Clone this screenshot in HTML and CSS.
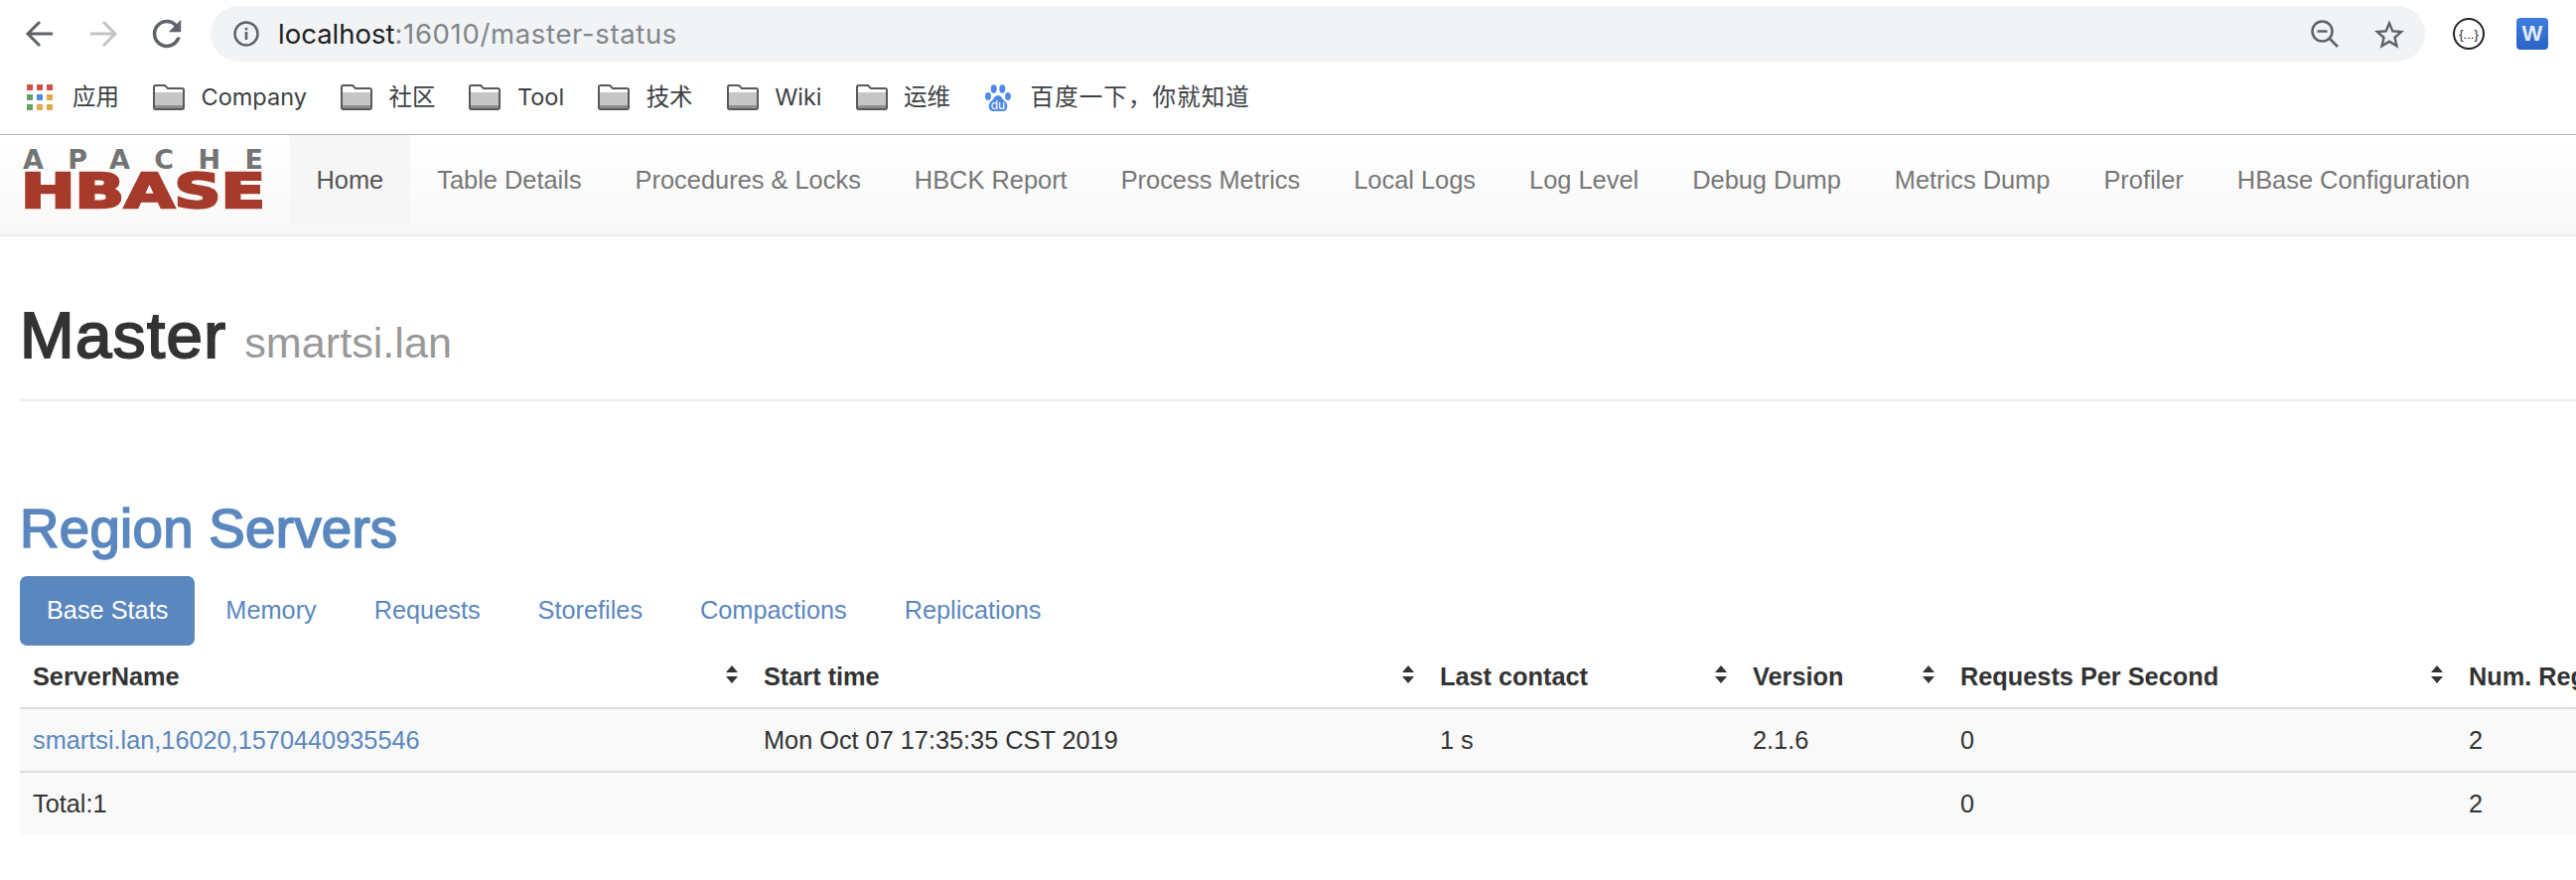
FILE: index.html
```html
<!DOCTYPE html>
<html>
<head>
  <title>Master: smartsi.lan</title>
  <link rel="stylesheet" href="styles.css">
</head>
<body>

<!-- browser chrome -->
<div class="toolbar">
  <svg class="tool-icon" viewBox="0 0 32 32"><path d="M29 16H4M16 4 4 16l12 12" fill="none" stroke="#5f6368" stroke-width="3"/></svg>
  <svg class="tool-icon" viewBox="0 0 32 32"><path d="M3 16h25M16 4l12 12-12 12" fill="none" stroke="#c2c4c6" stroke-width="3"/></svg>
  <svg class="tool-icon" viewBox="3 3 18 18"><path fill="#5f6368" d="M17.65 6.35C16.2 4.9 14.21 4 12 4c-4.42 0-7.99 3.58-7.99 8s3.57 8 7.99 8c3.73 0 6.84-2.55 7.73-6h-2.08c-.82 2.33-3.04 4-5.65 4-3.31 0-6-2.69-6-6s2.69-6 6-6c1.66 0 3.14.69 4.22 1.78L13 11h7V4l-2.35 2.35z"/></svg>
  <div class="omnibox">
    <svg class="info-icon" viewBox="0 0 26 26"><circle cx="13" cy="13" r="11.5" fill="none" stroke="#5f6368" stroke-width="2.5"/><rect x="11.7" y="11" width="2.6" height="8" fill="#5f6368"/><rect x="11.7" y="6.8" width="2.6" height="2.6" fill="#5f6368"/></svg>
    <span class="url">localhost<span class="url-rest">:16010/master-status</span></span>
    <svg class="zoom-icon" viewBox="0 0 28 28"><circle cx="11.5" cy="11.5" r="10" fill="none" stroke="#5f6368" stroke-width="2.6"/><path d="M18.5 18.5 27 27M6.5 11.5h10" fill="none" stroke="#5f6368" stroke-width="2.6"/></svg>
    <svg class="star-icon" viewBox="2 2 20 19"><path fill="#5f6368" d="M22 9.24l-7.19-.62L12 2 9.19 8.63 2 9.24l5.46 4.73L5.82 21 12 17.27 18.18 21l-1.63-7.03L22 9.24zM12 15.4l-3.76 2.27 1-4.28-3.32-2.88 4.38-.38L12 6.1l1.71 4.04 4.38.38-3.32 2.88 1 4.28L12 15.4z"/></svg>
  </div>
  <div class="ext-json">{...}</div>
  <div class="ext-word">W</div>
</div>

<div class="bookmarks">
  <div class="bookmark">
    <div class="apps-grid">
      <i class="red"></i><i class="red"></i><i class="red"></i>
      <i class="green"></i><i class="blue"></i><i class="yellow"></i>
      <i class="green"></i><i class="yellow"></i><i class="yellow"></i>
    </div>
    <span>应用</span>
  </div>
  <div class="bookmark">
    <svg class="folder" viewBox="0 0 32 26"><use href="#folder-shape"/></svg>
    <span>Company</span>
  </div>
  <div class="bookmark">
    <svg class="folder" viewBox="0 0 32 26"><use href="#folder-shape"/></svg>
    <span>社区</span>
  </div>
  <div class="bookmark">
    <svg class="folder" viewBox="0 0 32 26"><use href="#folder-shape"/></svg>
    <span>Tool</span>
  </div>
  <div class="bookmark">
    <svg class="folder" viewBox="0 0 32 26"><use href="#folder-shape"/></svg>
    <span>技术</span>
  </div>
  <div class="bookmark">
    <svg class="folder" viewBox="0 0 32 26"><use href="#folder-shape"/></svg>
    <span>Wiki</span>
  </div>
  <div class="bookmark">
    <svg class="folder" viewBox="0 0 32 26"><use href="#folder-shape"/></svg>
    <span>运维</span>
  </div>
  <div class="bookmark">
    <svg class="paw" viewBox="0 0 28 28">
      <ellipse cx="4" cy="13" rx="3" ry="4" fill="#4f8ae6"/>
      <ellipse cx="9.700" cy="5.500" rx="3" ry="4.200" fill="#4f8ae6"/>
      <ellipse cx="18.300" cy="5.500" rx="3" ry="4.200" fill="#4f8ae6"/>
      <ellipse cx="24" cy="13" rx="3" ry="4" fill="#4f8ae6"/>
      <path d="M14 12c3 0 4 3 6 5 3 2 4 5 3 8-1 3-3 3-5 3H10c-2 0-4 0-5-3-1-3 0-6 3-8 2-2 3-5 6-5z" fill="#4f8ae6"/>
      <text x="14" y="26" class="paw-text">du</text>
    </svg>
    <span class="baidu-name">百度一下，你就知道</span>
  </div>
</div>

<!-- hbase page -->
<nav class="navbar">
  <a class="brand" href="#">
    <svg class="logo" viewBox="0 0 240 60">
      <text x="-1" y="20" class="logo-apache" textLength="242" lengthAdjust="spacing">APACHE</text>
      <text x="-3" y="58.700" class="logo-hbase" textLength="246" lengthAdjust="spacingAndGlyphs">HBASE</text>
    </svg>
  </a>
  <ul class="nav-links">
    <li class="active"><a href="#">Home</a></li>
    <li><a href="#">Table Details</a></li>
    <li><a href="#">Procedures &amp; Locks</a></li>
    <li><a href="#">HBCK Report</a></li>
    <li><a href="#">Process Metrics</a></li>
    <li><a href="#">Local Logs</a></li>
    <li><a href="#">Log Level</a></li>
    <li><a href="#">Debug Dump</a></li>
    <li><a href="#">Metrics Dump</a></li>
    <li><a href="#">Profiler</a></li>
    <li><a href="#">HBase Configuration</a></li>
  </ul>
</nav>

<div class="container">
  <div class="page-header">
    <h1>Master <small>smartsi.lan</small></h1>
  </div>

  <h2 class="section-title"><a href="#">Region Servers</a></h2>

  <ul class="tabs">
    <li class="active"><a href="#">Base Stats</a></li>
    <li><a href="#">Memory</a></li>
    <li><a href="#">Requests</a></li>
    <li><a href="#">Storefiles</a></li>
    <li><a href="#">Compactions</a></li>
    <li><a href="#">Replications</a></li>
  </ul>

  <table class="servers">
    <colgroup>
      <col class="col-name">
      <col class="col-start">
      <col class="col-contact">
      <col class="col-version">
      <col class="col-rps">
      <col class="col-regions">
    </colgroup>
    <thead>
      <tr>
        <th><div class="th-inner">ServerName<span class="sort"></span></div></th>
        <th><div class="th-inner">Start time<span class="sort"></span></div></th>
        <th><div class="th-inner">Last contact<span class="sort"></span></div></th>
        <th><div class="th-inner">Version<span class="sort"></span></div></th>
        <th><div class="th-inner">Requests Per Second<span class="sort"></span></div></th>
        <th><div class="th-inner">Num. Regions<span class="sort"></span></div></th>
      </tr>
    </thead>
    <tbody>
      <tr>
        <td><a href="#">smartsi.lan,16020,1570440935546</a></td>
        <td>Mon Oct 07 17:35:35 CST 2019</td>
        <td>1 s</td>
        <td>2.1.6</td>
        <td>0</td>
        <td>2</td>
      </tr>
      <tr>
        <td>Total:1</td>
        <td></td>
        <td></td>
        <td></td>
        <td>0</td>
        <td>2</td>
      </tr>
    </tbody>
  </table>
</div>

<svg class="defs" width="0" height="0">
  <symbol id="folder-shape" viewBox="0 0 32 26">
    <path d="M2.5 25h27a1.5 1.5 0 0 0 1.5-1.500V5.500A1.500 1.500 0 0 0 29.500 4H15l-3-3H2.500A1.500 1.500 0 0 0 1 2.500v21A1.500 1.500 0 0 0 2.500 25z" fill="#fdfdfd" stroke="#58595b" stroke-width="2"/>
    <rect x="2" y="8" width="28" height="13" fill="#c6c6c6"/>
    <rect x="2" y="21" width="28" height="3" fill="#8e8e8e"/>
  </symbol>
</svg>

</body>
</html>
```

FILE: styles.css
```css
html, body {
  margin: 0;
  padding: 0;
  overflow: hidden;
}

body {
  font-family: "Liberation Sans", Arial, sans-serif;
  font-size: 25.3px;
  line-height: 36px;
  color: #333;
  background-color: white;
}

a {
  color: #5b87bf;
  text-decoration: none;
}

ul {
  list-style: none;
  margin: 0;
  padding: 0;
}

/* browser chrome */
.toolbar {
  display: flex;
  align-items: center;
  height: 68px;
  padding: 0 28px 0 24px;
  box-sizing: border-box;
}

.tool-icon {
  width: 32px;
  height: 32px;
  margin-right: 32px;
}

.tool-icon:nth-child(3) {
  margin-right: 28px;
}

.omnibox {
  flex: 1;
  display: flex;
  align-items: center;
  height: 56px;
  padding: 0 21px 0 23px;
  border-radius: 28px;
  background-color: #f1f3f4;
}

.info-icon {
  width: 26px;
  height: 26px;
  margin-right: 19px;
}

.url {
  flex: 1;
  font-family: Inter, sans-serif;
  font-size: 27.5px;
  color: #202124;
}

.url-rest {
  color: #80868b;
  letter-spacing: 0.65px;
}

.zoom-icon {
  width: 28px;
  height: 28px;
  margin-right: 36px;
}

.star-icon {
  width: 30px;
  height: 29px;
}

.ext-json {
  display: flex;
  align-items: center;
  justify-content: center;
  width: 32px;
  height: 32px;
  margin-left: 28px;
  border: 2px solid #222;
  border-radius: 50%;
  box-sizing: border-box;
  font-size: 13px;
  line-height: 1;
  white-space: nowrap;
  color: #222;
}

.ext-word {
  width: 32px;
  height: 32px;
  margin-left: 32px;
  border-radius: 4px;
  background: linear-gradient(#3f7ee0, #2b62c6);
  font-weight: bold;
  font-size: 22px;
  line-height: 32px;
  text-align: center;
  color: #e4ecfa;
}

.bookmarks {
  display: flex;
  align-items: center;
  gap: 34px;
  height: 59px;
  padding: 0 0 8px 27px;
  border-bottom: 1px solid #b5b5b5;
  font-family: Inter, "Noto Sans CJK SC", sans-serif;
  font-size: 23.5px;
  color: #3c4043;
}

.bookmark {
  display: flex;
  align-items: center;
  gap: 16.5px;
}

.baidu-name {
  letter-spacing: 1.1px;
}

.apps-grid {
  display: grid;
  grid-template-columns: repeat(3, 6px);
  grid-template-rows: repeat(3, 6px);
  gap: 4px;
  margin-right: 3.5px;
}

.apps-grid .red { background-color: #cf5246; }
.apps-grid .green { background-color: #6a9e64; }
.apps-grid .blue { background-color: #4f8ae6; }
.apps-grid .yellow { background-color: #e2a94b; }

.folder {
  width: 32px;
  height: 26px;
}

.paw {
  width: 28px;
  height: 28px;
  margin-right: 2px;
}

.paw-text {
  font-size: 12px;
  fill: white;
  text-anchor: middle;
}

.defs {
  position: absolute;
}

/* navbar */
.navbar {
  display: flex;
  height: 100px;
  border-bottom: 2px solid #eeeeee;
  background: linear-gradient(#ffffff, #f8f8f8);
}

.brand {
  display: block;
  width: 240px;
  height: 60px;
  margin: 14px 27.5px 0 24px;
}

.logo {
  display: block;
  width: 240px;
  height: 60px;
  overflow: visible;
}

.logo-apache {
  font-family: "DejaVu Sans", sans-serif;
  font-weight: bold;
  font-size: 27px;
  fill: #747474;
}

.logo-hbase {
  font-family: "DejaVu Sans", sans-serif;
  font-weight: bold;
  font-size: 48px;
  fill: #a63a2b;
  stroke: #a63a2b;
  stroke-width: 2.5px;
}

.nav-links {
  display: flex;
  font-size: 25.4px;
}

.nav-links a {
  display: block;
  height: 90px;
  padding: 0 27px;
  line-height: 90px;
  color: #777;
}

.nav-links .active a {
  color: #555;
  background-color: #f6f6f6;
}

/* page */
.container {
  padding-left: 20px;
}

.page-header {
  margin-top: 64px;
  padding-bottom: 21px;
  border-bottom: 2px solid #eeeeee;
}

h1 {
  margin: 0;
  font-size: 65.5px;
  font-weight: normal;
  line-height: 71px;
  letter-spacing: 1.4px;
  -webkit-text-stroke: 2px #333;
}

h1 small {
  margin-left: -2px;
  font-size: 43.2px;
  letter-spacing: 0;
  color: #999;
  -webkit-text-stroke: 0;
}

.section-title {
  margin: 99px 0 17px;
  font-size: 54.6px;
  font-weight: normal;
  line-height: 60px;
  letter-spacing: 0.3px;
  -webkit-text-stroke: 1.7px #5b87bf;
}

.tabs {
  display: flex;
  gap: 4px;
}

.tabs a {
  display: block;
  height: 70px;
  padding: 0 27px;
  border-radius: 7px;
  line-height: 69px;
}

.tabs .active a {
  color: white;
  background-color: #5b87bf;
}

/* region server table */
.servers {
  table-layout: fixed;
  width: 2853px;
  border-spacing: 0;
}

.col-name { width: 736px; }
.col-start { width: 681px; }
.col-contact { width: 315px; }
.col-version { width: 209px; }
.col-rps { width: 512px; }
.col-regions { width: 400px; }

.servers th {
  height: 64px;
  padding: 0 13px 1px;
  border-bottom: 2px solid #dddddd;
  box-sizing: border-box;
  text-align: left;
  white-space: nowrap;
}

.th-inner {
  display: flex;
  justify-content: space-between;
  align-items: center;
}

.sort {
  position: relative;
  width: 12px;
  height: 18px;
  flex-shrink: 0;
  margin-top: -4px;
}

.sort::before,
.sort::after {
  content: "";
  position: absolute;
  left: 0;
  border-left: 6px solid transparent;
  border-right: 6px solid transparent;
}

.sort::before {
  top: 0;
  border-bottom: 7px solid #333;
}

.sort::after {
  bottom: 0;
  border-top: 7px solid #333;
}

.servers td {
  height: 64px;
  padding: 0 13px;
  border-bottom: 2px solid #dddddd;
  box-sizing: border-box;
  background-color: #f9f9f9;
  white-space: nowrap;
}

.servers tr:last-child td {
  height: 62px;
  border-bottom: none;
}
```
